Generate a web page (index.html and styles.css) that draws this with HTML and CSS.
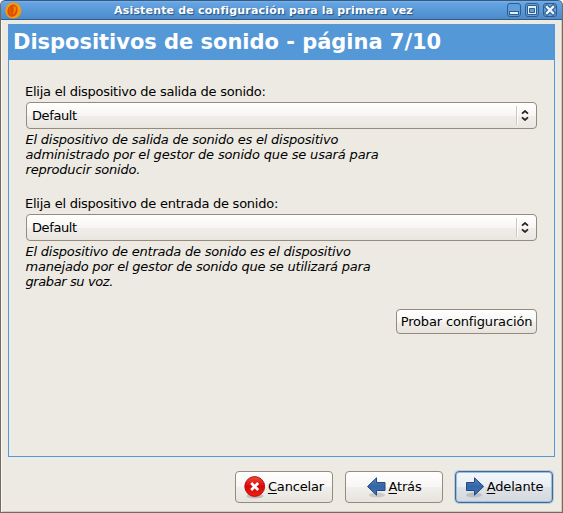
FILE: index.html
```html
<!DOCTYPE html>
<html lang="es">
<head>
<meta charset="utf-8">
<title>Asistente de configuración para la primera vez</title>
<link rel="stylesheet" href="styles.css">
</head>
<body>
<div class="window">
  <header class="titlebar">
    <svg class="app-icon" width="17" height="17" viewBox="0 0 17 17">
      <circle cx="8.300" cy="8.500" r="8" fill="#f49a0c"/>
      <ellipse cx="7.800" cy="8.800" rx="5" ry="6.200" fill="#dc4d00" transform="rotate(20 8 8)"/>
      <path d="M8 4.500C10 3.500 12 5 11 8C10.500 10.500 9 12 7.500 12.500C8.500 10 9 7 8 4.500Z" fill="#f08008"/>
      <path d="M5 6C4.500 9 5 11 6.500 12.500" fill="none" stroke="#e56300" stroke-width="1.200"/>
    </svg>
    <span class="caption">Asistente de configuración para la primera vez</span>
    <div class="controls">
      <svg width="14" height="14" viewBox="0 0 14 14"><rect class="key" x=".5" y=".5" width="13" height="13" rx="2.500"/><rect class="glyph" x="2.500" y="8.500" width="9" height="3"/></svg>
      <svg width="14" height="14" viewBox="0 0 14 14"><rect class="key" x=".5" y=".5" width="13" height="13" rx="2.500"/><path class="glyph" fill-rule="evenodd" d="M2.500 2.500h9v9h-9zM4.500 5.500v4h5v-4z"/></svg>
      <svg width="14" height="14" viewBox="0 0 14 14"><rect class="key" x=".5" y=".5" width="13" height="13" rx="2.500"/><path class="cross-edge" d="M4 4l6 6M10 4l-6 6"/><path class="cross" d="M4 4l6 6M10 4l-6 6"/></svg>
    </div>
  </header>
  <main class="page">
    <h1 class="heading"><span>Dispositivos de sonido - página 7/10</span></h1>
    <div class="form">
      <section class="field">
        <label class="label">Elija el dispositivo de salida de sonido:</label>
        <div class="combo"><span>Default</span><i class="divider"></i><svg width="8" height="11" viewBox="0 0 8 11"><path d="M1 3.700L4 1l3 2.700M1 7.300L4 10l3-2.700"/></svg></div>
        <p class="hint">El dispositivo de salida de sonido es el dispositivo<br><span class="wide">administrado por el gestor de sonido que se usará para</span><br>reproducir sonido.</p>
      </section>
      <section class="field">
        <label class="label">Elija el dispositivo de entrada de sonido:</label>
        <div class="combo"><span>Default</span><i class="divider"></i><svg width="8" height="11" viewBox="0 0 8 11"><path d="M1 3.700L4 1l3 2.700M1 7.300L4 10l3-2.700"/></svg></div>
        <p class="hint">El dispositivo de entrada de sonido es el dispositivo<br>manejado por el gestor de sonido que se utilizará para<br><span class="tight">grabar su voz.</span></p>
      </section>
      <button class="button test">Probar configuración</button>
    </div>
  </main>
  <footer class="actions">
    <button class="button cancel">
      <svg width="22" height="23" viewBox="0 0 22 23">
        <defs><linearGradient id="red" x2="0" y2="1"><stop offset="0" stop-color="#ef4b3b"/><stop offset=".5" stop-color="#d80808"/><stop offset="1" stop-color="#f02010"/></linearGradient></defs>
        <ellipse cx="11" cy="20" rx="8.500" ry="2.500" fill="#000" opacity=".18"/>
        <circle cx="10.700" cy="10.500" r="9.900" fill="url(#red)" stroke="#b80c0c"/>
        <path d="M7.200 7l7 7M14.200 7l-7 7" stroke="#fff" stroke-width="2.700"/>
      </svg><span><u>C</u>ancelar</span>
    </button>
    <button class="button back">
      <svg width="20" height="22" viewBox="0 0 20 22">
        <defs><linearGradient id="blue" x2="0" y2="1"><stop offset="0" stop-color="#5585c0"/><stop offset=".5" stop-color="#3465a4"/><stop offset="1" stop-color="#4374b2"/></linearGradient></defs>
        <ellipse cx="11" cy="19" rx="8" ry="2.500" fill="#000" opacity=".13"/>
        <path class="arrow" d="M1.500 10.500L10.500 1.800v4.700h8.500v8h-8.500V19.200Z"/>
      </svg><span><u>A</u>trás</span>
    </button>
    <button class="button next">
      <svg width="20" height="22" viewBox="0 0 20 22">
        <ellipse cx="9" cy="19" rx="8" ry="2.500" fill="#000" opacity=".13"/>
        <path class="arrow" d="M18.700 10.500L9.500 1.800v4.700h-8v8h8V19.200Z"/>
      </svg><span><u>A</u>delante</span>
    </button>
  </footer>
</div>
</body>
</html>
```
FILE: styles.css
```css
* { box-sizing: border-box; }
body {
  margin: 0;
  background: #fff;
  color: #000;
  font: 13px/15px "DejaVu Sans", sans-serif;
}
.window {
  display: flex;
  flex-direction: column;
  width: 563px;
  height: 513px;
  overflow: hidden;
  border: 1px solid #736a60;
  border-top: 0;
  border-radius: 5px 5px 0 0;
  background: #edeae3;
  box-shadow: inset 1px 0 #f8f6f2, inset -1px -1px #d2cabb;
}
.titlebar {
  display: flex;
  align-items: center;
  flex: 0 0 20px;
  margin: 0 -1px;
  padding: 0 5px 0 4px;
  border: 1px solid #355b85;
  border-radius: 5px 5px 0 0;
  background: linear-gradient(#7bb1e8, #65a3e1 2px, #4b8ccd);
}
.app-icon { flex: none; }
.caption {
  flex: 1;
  padding-right: 2px;
  text-align: center;
  color: #fff;
  font-size: 11px;
  font-weight: bold;
  letter-spacing: .175px;
  text-shadow: 1px 1px 1px #245181;
  white-space: nowrap;
}
.controls { display: flex; gap: 4px; width: 50px; }
.controls svg { flex: none; }
.key { fill: #5f9edc; stroke: #335d88; }
.glyph { fill: #e3effb; stroke: #335d88; }
.cross-edge { stroke: #335d88; stroke-width: 4.500; stroke-linecap: square; }
.cross { stroke: #edf6ff; stroke-width: 2.400; stroke-linecap: square; }
.page {
  flex: 0 0 433px;
  width: 547px;
  margin: 4px 0 0 7px;
  border: 1px solid #5598d8;
}
.heading {
  height: 35px;
  margin: 0;
  padding-left: 4px;
  background: #5598d8;
  color: #fff;
  font-size: 21px;
  line-height: 35px;
  letter-spacing: -.03px;
  white-space: nowrap;
}
.form { padding: 24px 17px 0 16px; display: flex; flex-direction: column; }
.field { height: 112px; white-space: nowrap; letter-spacing: -.215px; }
.label { display: block; height: 18px; line-height: 16px; letter-spacing: -.25px; }
.combo {
  display: flex;
  align-items: center;
  width: 511px;
  height: 27px;
  margin-left: 1px;
  padding: 0 7px 0 5px;
  border: 1px solid #968a7d;
  border-radius: 4px;
  background: linear-gradient(#fff, #f7f6f4 50%, #f1efeb 51%, #e9e6e0);
}
.combo span { flex: 1; letter-spacing: -.4px; }
.divider { width: 2px; height: 19px; margin-right: 3px; background: #cfc6b9; border-right: 1px solid #fff; }
.combo svg { fill: none; stroke: #222; stroke-width: 1.700; }
.hint { margin: 3px 0 0; padding-left: .5px; font-style: italic; }
.wide { letter-spacing: -.16px; }
.tight { letter-spacing: -.4px; }
.button {
  display: flex;
  align-items: center;
  justify-content: center;
  padding: 0;
  border: 1px solid #968a7d;
  border-radius: 4px;
  background: linear-gradient(#fff, #f7f6f4 50%, #f1efeb 51%, #e7e4de);
  color: #000;
  font: inherit;
  letter-spacing: -.15px;
  white-space: nowrap;
}
.test { align-self: flex-end; width: 141px; height: 25px; margin-top: 1px; }
.actions { display: flex; justify-content: flex-end; gap: 12px; padding: 14px 9px 0 0; }
.actions .button { width: 98px; height: 32px; }
.actions svg { flex: none; margin-right: 2px; }
.actions span { margin-bottom: 2px; }
.arrow { fill: url(#blue); stroke: #204a87; stroke-linejoin: round; }
.actions .next {
  border-color: #43698f;
  background: linear-gradient(#f3f7fc, #e9eef4 50%, #dfe3e7 51%, #d3d8dc);
  box-shadow: inset 0 0 0 1px #9fbddd, 0 0 0 1px #b5cde5;
}
u { text-decoration-thickness: 1px; text-underline-offset: 2px; }
```
